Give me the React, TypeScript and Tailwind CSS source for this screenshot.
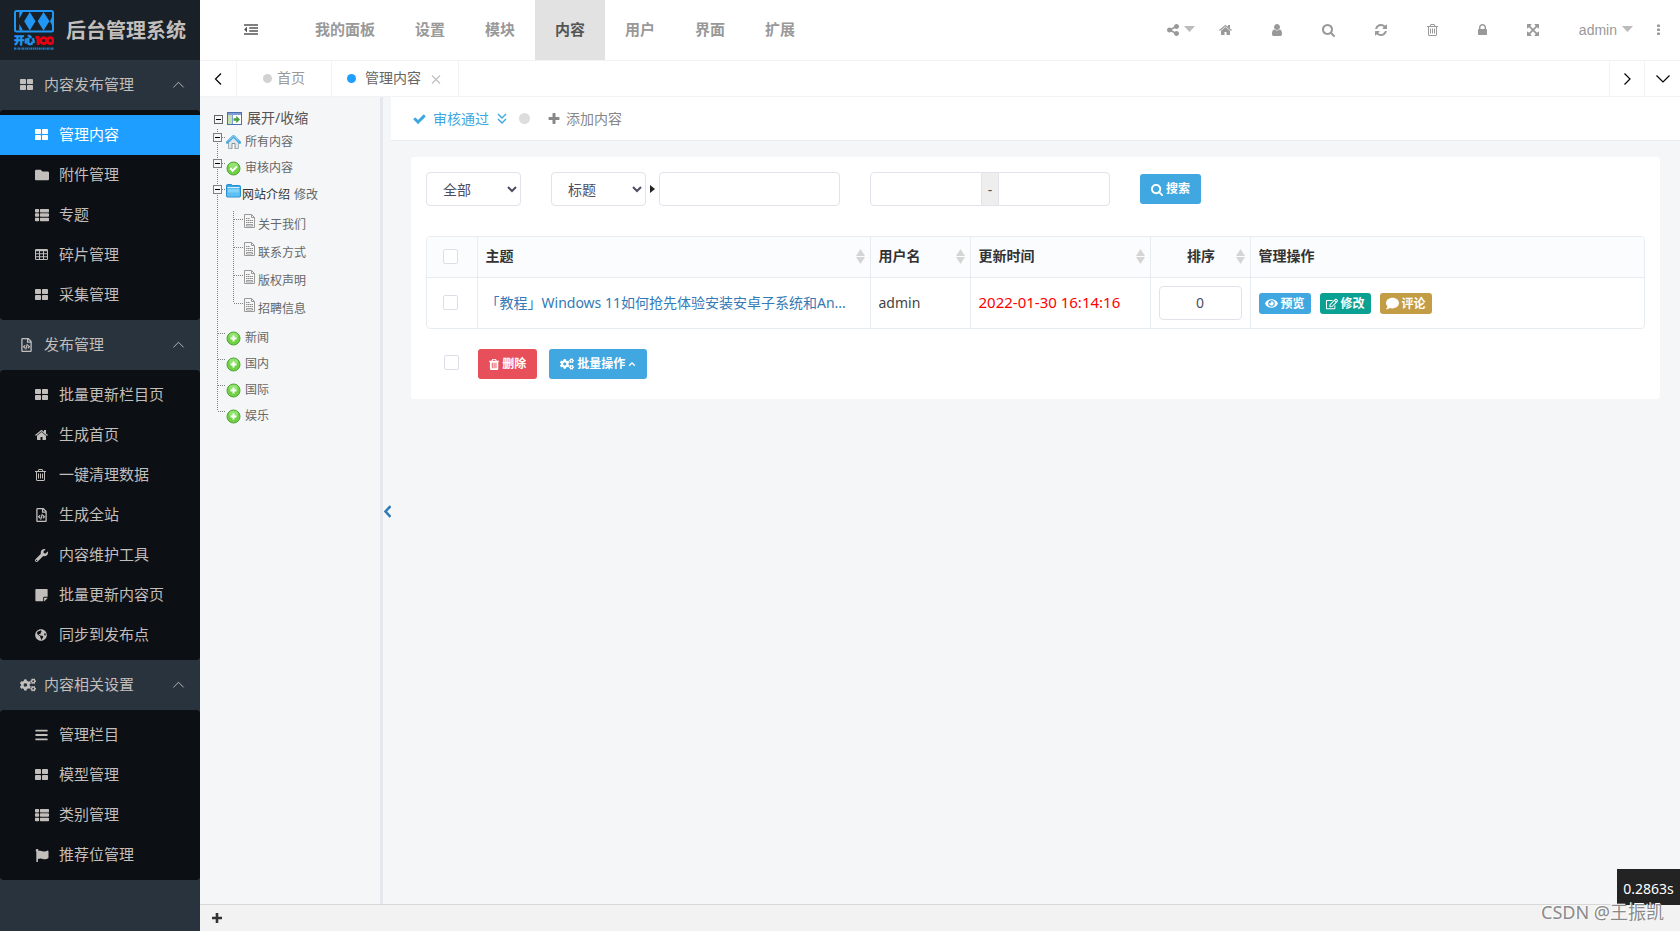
import type { ReactNode } from "react";
import {
  FaBars,
  FaCogs,
  FaComment,
  FaEye,
  FaFlag,
  FaFolder,
  FaGlobeAmericas,
  FaRegEdit,
  FaRegFileCode,
  FaStickyNote,
  FaThList,
  FaWrench,
} from "react-icons/fa";

const UI = "font-['Noto_Sans','Noto_Sans_CJK_SC',sans-serif]";
const HELV = "font-['Liberation_Sans','Noto_Sans_CJK_SC',sans-serif]";

/* ---------- glyph icons on a 1792 unit grid, 14px tall ---------- */

const glyphs = {
  thLarge: {
    w: 13,
    d: "M832 1024v384q0 52-38 90t-90 38h-512q-52 0-90-38t-38-90v-384q0-52 38-90t90-38h512q52 0 90 38t38 90zm0-768v384q0 52-38 90t-90 38h-512q-52 0-90-38t-38-90v-384q0-52 38-90t90-38h512q52 0 90 38t38 90zm896 768v384q0 52-38 90t-90 38h-512q-52 0-90-38t-38-90v-384q0-52 38-90t90-38h512q52 0 90 38t38 90zm0-768v384q0 52-38 90t-90 38h-512q-52 0-90-38t-38-90v-384q0-52 38-90t90-38h512q52 0 90 38t38 90z",
  },
  home: {
    w: 13,
    d: "M1472 992v480q0 26-19 45t-45 19h-384v-384h-256v384h-384q-26 0-45-19t-19-45v-480q0-1 .5-3t.5-3l575-474 575 474q1 2 1 6zm223-69l-62 74q-8 9-21 11h-3q-13 0-21-7l-692-577-692 577q-12 8-24 7-13-2-21-11l-62-74q-8-10-7-23.5t11-21.5l719-599q32-26 76-26t76 26l244 204v-195q0-14 9-23t23-9h192q14 0 23 9t9 23v408l219 182q10 8 11 21.5t-7 23.5z",
  },
  user: {
    w: 10,
    d: "M1536 1399q0 109-62.5 187t-150.5 78h-854q-88 0-150.5-78t-62.5-187q0-85 8.5-160.5t31.5-152 58.5-131 94-89 134.5-34.5q131 128 313 128t313-128q76 0 134.5 34.5t94 89 58.5 131 31.5 152 8.5 160.5zm-256-887q0 159-112.5 271.5t-271.5 112.5-271.5-112.5-112.5-271.5 112.5-271.5 271.5-112.5 271.5 112.5 112.5 271.5z",
  },
  search: {
    w: 13,
    d: "M1216 832q0-185-131.5-316.5t-316.5-131.5-316.5 131.5-131.5 316.5 131.5 316.5 316.5 131.5 316.5-131.5 131.5-316.5zm512 832q0 52-38 90t-90 38q-54 0-90-38l-343-342q-179 124-399 124-143 0-273.5-55.5t-225-150-150-225-55.5-273.5 55.5-273.5 150-225 225-150 273.5-55.5 273.5 55.5 225 150 150 225 55.5 273.5q0 220-124 399l343 343q37 37 37 90z",
  },
  refresh: {
    w: 12,
    d: "M1639 1056q0 5-1 7-64 268-268 434.5t-478 166.5q-146 0-282.5-55t-243.5-157l-129 129q-19 19-45 19t-45-19-19-45v-448q0-26 19-45t45-19h448q26 0 45 19t19 45-19 45l-137 137q71 66 161 102t187 36q134 0 250-65t186-179q11-17 53-117 8-23 30-23h192q13 0 22.5 9.5t9.5 22.5zm25-800v448q0 26-19 45t-45 19h-448q-26 0-45-19t-19-45 19-45l138-138q-148-137-349-137-134 0-250 65t-186 179q-11 17-53 117-8 23-30 23h-199q-13 0-22.5-9.5t-9.5-22.5v-7q65-268 270-434.5t480-166.5q146 0 284 55.5t245 156.5l130-129q19-19 45-19t45 19 19 45z",
  },
  trash: {
    w: 11,
    d: "M704 736v576q0 14-9 23t-23 9h-64q-14 0-23-9t-9-23v-576q0-14 9-23t23-9h64q14 0 23 9t9 23zm256 0v576q0 14-9 23t-23 9h-64q-14 0-23-9t-9-23v-576q0-14 9-23t23-9h64q14 0 23 9t9 23zm256 0v576q0 14-9 23t-23 9h-64q-14 0-23-9t-9-23v-576q0-14 9-23t23-9h64q14 0 23 9t9 23zm128 724v-948h-896v948q0 22 7 40.5t14.5 27 10.5 8.5h832q3 0 10.5-8.5t14.5-27 7-40.5zm-672-1076h448l-48-117q-7-9-17-11h-317q-10 2-17 11zm928 32v64q0 14-9 23t-23 9h-96v948q0 83-47 143.5t-113 60.5h-832q-66 0-113-58.5t-47-141.5v-952h-96q-14 0-23-9t-9-23v-64q0-14 9-23t23-9h309l70-167q15-37 54-63t79-26h320q40 0 79 26t54 63l70 167h309q14 0 23 9t9 23z",
  },
  trashSolid: {
    w: 11,
    d: "M704 1376v-704q0-14-9-23t-23-9h-64q-14 0-23 9t-9 23v704q0 14 9 23t23 9h64q14 0 23-9t9-23zm256 0v-704q0-14-9-23t-23-9h-64q-14 0-23 9t-9 23v704q0 14 9 23t23 9h64q14 0 23-9t9-23zm256 0v-704q0-14-9-23t-23-9h-64q-14 0-23 9t-9 23v704q0 14 9 23t23 9h64q14 0 23-9t9-23zm-544-992h448l-48-117q-7-9-17-11h-317q-10 2-17 11zm928 32v64q0 14-9 23t-23 9h-96v948q0 83-47 143.5t-113 60.5h-832q-66 0-113-58.5t-47-141.5v-952h-96q-14 0-23-9t-9-23v-64q0-14 9-23t23-9h309l70-167q15-37 54-63t79-26h320q40 0 79 26t54 63l70 167h309q14 0 23 9t9 23z",
  },
  lock: {
    w: 9,
    d: "M640 768h512v-192q0-106-75-181t-181-75-181 75-75 181v192zm832 96v576q0 40-28 68t-68 28h-960q-40 0-68-28t-28-68v-576q0-40 28-68t68-28h32v-192q0-184 132-316t316-132 316 132 132 316v192h32q40 0 68 28t28 68z",
  },
  expand: {
    w: 12,
    d: "M1411 541l-355 355 355 355 144-144q29-31 70-14 39 17 39 59v448q0 26-19 45t-45 19h-448q-42 0-59-40-17-39 14-69l144-144-355-355-355 355 144 144q31 30 14 69-17 40-59 40h-448q-26 0-45-19t-19-45v-448q0-42 40-59 39-17 69 14l144 144 355-355-355-355-144 144q-19 19-45 19-12 0-24-5-40-17-40-59v-448q0-26 19-45t45-19h448q42 0 59 40 17 39-14 69l-144 144 355 355 355-355-144-144q-31-30-14-69 17-40 59-40h448q26 0 45 19t19 45v448q0 42-39 59-13 5-25 5-26 0-45-19z",
  },
  share: {
    w: 12,
    d: "M1344 1024q133 0 226.5 93.5t93.5 226.5-93.5 226.5-226.5 93.5-226.5-93.5-93.5-226.5q0-12 2-34l-360-180q-92 86-218 86-133 0-226.5-93.5t-93.5-226.5 93.5-226.5 226.5-93.5q126 0 218 86l360-180q-2-22-2-34 0-133 93.5-226.5t226.5-93.5 226.5 93.5 93.5 226.5-93.5 226.5-226.5 93.5q-126 0-218-86l-360 180q2 22 2 34t-2 34l360 180q92-86 218-86z",
  },
  check: {
    w: 13,
    d: "M1671 566q0 40-28 68l-724 724-136 136q-28 28-68 28t-68-28l-136-136-362-362q-28-28-28-68t28-68l136-136q28-28 68-28t68 28l294 295 656-657q28-28 68-28t68 28l136 136q28 28 28 68z",
  },
  plus: {
    w: 12,
    d: "M1600 736v192q0 40-28 68t-68 28h-416v416q0 40-28 68t-68 28h-192q-40 0-68-28t-28-68v-416h-416q-40 0-68-28t-28-68v-192q0-40 28-68t68-28h416v-416q0-40 28-68t68-28h192q40 0 68 28t28 68v416h416q40 0 68 28t28 68z",
  },
  outdent: {
    w: 14,
    d: "M384 544v576q0 13-9.5 22.5t-22.5 9.5q-14 0-23-9l-288-288q-9-9-9-23t9-23l288-288q9-9 23-9 13 0 22.5 9.5t9.5 22.5zM32 160h1728q32 0 32 32v128q0 32-32 32h-1728q-32 0-32-32v-128q0-32 32-32zM704 544h1056q32 0 32 32v128q0 32-32 32h-1056q-32 0-32-32v-128q0-32 32-32zM704 928h1056q32 0 32 32v128q0 32-32 32h-1056q-32 0-32-32v-128q0-32 32-32zM32 1312h1728q32 0 32 32v128q0 32-32 32h-1728q-32 0-32-32v-128q0-32 32-32z",
  },
  ellipsis: {
    w: 3,
    d: "M800 192h192q96 0 96 96v128q0 96-96 96h-192q-96 0-96-96v-128q0-96 96-96zM800 704h192q96 0 96 96v128q0 96-96 96h-192q-96 0-96-96v-128q0-96 96-96zM800 1216h192q96 0 96 96v128q0 96-96 96h-192q-96 0-96-96v-128q0-96 96-96z",
  },
  table: {
    w: 13,
    d: "M224 128h1344q160 0 160 160v1088q0 160-160 160h-1344q-160 0-160-160v-1088q0-160 160-160zM192 416v256h384v-256zM704 416v256h384v-256zM1216 416v256h384v-256zM192 800v256h384v-256zM704 800v256h384v-256zM1216 800v256h384v-256zM192 1168v240h384v-240zM704 1168v240h384v-240zM1216 1168v240h384v-240z",
  },
};

function Glyph({ name, className = "h-[14px]" }: { name: keyof typeof glyphs; className?: string }) {
  const g = glyphs[name];
  return (
    <svg
      className={`${className} w-auto shrink-0`}
      viewBox={`${896 - g.w * 64} 0 ${g.w * 128} 1792`}
      fill="currentColor"
      fillRule="evenodd"
      aria-hidden="true"
    >
      <path d={g.d} />
    </svg>
  );
}

function Chevron({ d, className, width = 1.3 }: { d: string; className: string; width?: number }) {
  return (
    <svg className={className} viewBox="0 0 14 14" fill="none" stroke="currentColor" strokeWidth={width} aria-hidden="true">
      <path d={d} />
    </svg>
  );
}

/* ---------- sidebar ---------- */

function Logo() {
  return (
    <svg className="h-10 w-10 shrink-0" viewBox="0 0 40 40" aria-hidden="true">
      <rect width="40" height="22.500" rx="2.500" fill="#2196f3" />
      <path d="M2 2h36v18.500H2z" fill="#192027" />
      <g fill="#2196f3">
        <path d="M15.800 2L21.500 11.200 15.800 20.500 10.200 11.200z" />
        <path d="M29.500 2L35.500 11.200 29.500 20.500 23.700 11.200z" />
        <path d="M5.300 2H9L5.300 8.500zM5.300 20.500H9L5.300 14z" />
        <path d="M38.500 6v10.500L36 11.200z" />
      </g>
      <text x="0" y="34.300" fontSize="10.500" fontWeight="900" fill="#2196f3" fontFamily="Noto Sans CJK SC" stroke="#2196f3" strokeWidth=".5">
        开心
      </text>
      <g fill="none" stroke="#e60012" strokeWidth="2.800">
        <path d="M21.500 27.300h2.600V35" />
        <circle cx="29.700" cy="30.600" r="3" />
        <circle cx="36.300" cy="30.600" r="3" />
      </g>
      <path d="M0 38.600h40" stroke="#2196f3" strokeWidth="2.300" strokeDasharray="2 .6 1 .5" opacity=".75" />
    </svg>
  );
}

type Item = { icon: ReactNode; label: string; active?: boolean };

const groups: { icon: ReactNode; label: string; items: Item[] }[] = [
  {
    icon: <Glyph name="thLarge" />,
    label: "内容发布管理",
    items: [
      { icon: <Glyph name="thLarge" />, label: "管理内容", active: true },
      { icon: <FaFolder className="h-[14px] w-[14px]" />, label: "附件管理" },
      { icon: <FaThList className="h-[14px] w-[14px]" />, label: "专题" },
      { icon: <Glyph name="table" />, label: "碎片管理" },
      { icon: <Glyph name="thLarge" />, label: "采集管理" },
    ],
  },
  {
    icon: <FaRegFileCode className="h-[14px] w-[13px]" />,
    label: "发布管理",
    items: [
      { icon: <Glyph name="thLarge" />, label: "批量更新栏目页" },
      { icon: <Glyph name="home" />, label: "生成首页" },
      { icon: <Glyph name="trash" />, label: "一键清理数据" },
      { icon: <FaRegFileCode className="h-[14px] w-[13px]" />, label: "生成全站" },
      { icon: <FaWrench className="h-[13px] w-[13px]" />, label: "内容维护工具" },
      { icon: <FaStickyNote className="h-[14px] w-[13px]" />, label: "批量更新内容页" },
      { icon: <FaGlobeAmericas className="h-3 w-3" />, label: "同步到发布点" },
    ],
  },
  {
    icon: <FaCogs className="h-4 w-4" />,
    label: "内容相关设置",
    items: [
      { icon: <FaBars className="h-[14px] w-[13px]" />, label: "管理栏目" },
      { icon: <Glyph name="thLarge" />, label: "模型管理" },
      { icon: <FaThList className="h-[14px] w-[14px]" />, label: "类别管理" },
      { icon: <FaFlag className="h-[13px] w-[14px]" />, label: "推荐位管理" },
    ],
  },
];

function Sidebar() {
  return (
    <aside className="w-[200px] shrink-0 bg-[#28333e] text-[15px] text-[#c2bebc]">
      <div className="flex h-[60px] items-center gap-3 bg-[#192027] pr-3 pl-[14px]">
        <Logo />
        <h1 className="pt-[2px] text-xl font-bold whitespace-nowrap">后台管理系统</h1>
      </div>
      <nav>
        {groups.map((g) => (
          <section key={g.label}>
            <button type="button" className="flex h-[50px] w-full items-center pr-[15px] pl-5 text-left">
              <span className="flex w-6 items-center">{g.icon}</span>
              <span className="flex-1 pb-[2px]">{g.label}</span>
              <Chevron d="M1.500 9L7 3.500 12.500 9" className="h-[13px] w-[13px]" width={1} />
            </button>
            <ul className="rounded-sm bg-[#0c0f13] py-[5px]">
              {g.items.map((it) => (
                <li key={it.label}>
                  <a
                    href="#"
                    className={`flex h-10 items-center pl-[35px] ${it.active ? "bg-[#1e9fff] text-white" : ""}`}
                  >
                    <span className="flex w-6 items-center">{it.icon}</span>
                    <span className="pb-[2px]">{it.label}</span>
                  </a>
                </li>
              ))}
            </ul>
          </section>
        ))}
      </nav>
    </aside>
  );
}

/* ---------- top bar and tabs ---------- */

function Caret() {
  return (
    <svg className="mb-[3px] h-[6px] w-[11px]" viewBox="0 0 11 6" fill="#bbb" aria-hidden="true">
      <path d="M0 0h11L5.500 6z" />
    </svg>
  );
}

const menus = ["我的面板", "设置", "模块", "内容", "用户", "界面", "扩展"];
const tools: { name: keyof typeof glyphs; label: string }[] = [
  { name: "home", label: "首页" },
  { name: "user", label: "用户" },
  { name: "search", label: "搜索" },
  { name: "refresh", label: "刷新" },
  { name: "trash", label: "清理" },
  { name: "lock", label: "锁定" },
  { name: "expand", label: "全屏" },
];

function TopBar() {
  return (
    <header className={`flex h-[61px] border-b border-[#f3f3f3] bg-white text-[#999] ${HELV}`}>
      <button type="button" aria-label="收起侧栏" className="mr-[17px] ml-[23px] flex w-[55px] items-center justify-center text-[#555]">
        <Glyph name="outdent" />
      </button>
      <nav className="flex text-[15px] font-bold">
        {menus.map((m) => (
          <a key={m} href="#" className={`flex items-center px-5 ${m === "内容" ? "bg-[#e2e2e2] text-[#555]" : ""}`}>
            {m}
          </a>
        ))}
      </nav>
      <div className="ml-auto flex items-center pr-5">
        <button type="button" aria-label="分享" className="flex items-center gap-[5px] pr-1">
          <Glyph name="share" />
          <Caret />
        </button>
        {tools.map((t) => (
          <button key={t.name} type="button" aria-label={t.label} className="px-5">
            <Glyph name={t.name} />
          </button>
        ))}
        <button type="button" className="ml-5 flex items-center gap-[5px] text-[14px]">
          admin
          <Caret />
        </button>
        <button type="button" aria-label="更多" className="ml-6">
          <Glyph name="ellipsis" />
        </button>
      </div>
    </header>
  );
}

function TabBar() {
  return (
    <div className="flex h-9 border-b border-[#f3f3f3] bg-white text-[14px]">
      <button type="button" aria-label="向左" className="flex w-[37px] items-center justify-center border-r border-[#f3f3f3] text-black">
        <Chevron d="M10 1.500L4.500 7l5.500 5.500" className="h-[14px] w-[14px]" width={1.2} />
      </button>
      <a href="#" className="flex w-[95px] items-center gap-[5px] border-r border-[#f3f3f3] pl-[26px] text-[#999]">
        <span className="h-[9px] w-[9px] rounded-full bg-[#d2d2d2]" />
        <span className="pb-[2px]">首页</span>
      </a>
      <div className="flex w-[127px] items-center border-r border-[#f3f3f3] pl-[15px] text-[#666]">
        <span className="mr-[9px] h-[9px] w-[9px] rounded-full bg-[#1e9fff]" />
        <a href="#" className="pb-[2px]">管理内容</a>
        <button type="button" aria-label="关闭" className="ml-2 text-[#c2c2c2]">
          <Chevron d="M3 3.500l8 8M11 3.500l-8 8" className="h-[14px] w-[14px]" />
        </button>
      </div>
      <button type="button" aria-label="向右" className="ml-auto flex w-[35px] items-center justify-center border-l border-[#f3f3f3] text-black">
        <Chevron d="M4.500 1.500L10 7l-5.500 5.500" className="h-[14px] w-[14px]" width={1.2} />
      </button>
      <button type="button" aria-label="标签菜单" className="flex w-9 items-center justify-center border-l border-[#f3f3f3] text-black">
        <Chevron d="M.5 3.500L7 10 13.500 3.500" className="h-[14px] w-[14px]" width={1.2} />
      </button>
    </div>
  );
}

/* ---------- category tree ---------- */

function Branch({ toggle, last }: { toggle?: boolean; last?: boolean }) {
  return (
    <svg className="h-[26px] w-[13px] shrink-0" viewBox="0 0 13 26" fill="none" aria-hidden="true">
      <path d={`M4.500 0V${last ? 8 : 26}`} stroke="#808080" strokeDasharray="1 1" />
      <path d="M5 8.500h8" stroke="#808080" strokeDasharray="1 1" />
      {toggle && (
        <>
          <rect x=".5" y="4.500" width="8" height="8" fill="#f4f6f8" stroke="#808080" />
          <path d="M2 8.500h5" stroke="#000" />
        </>
      )}
    </svg>
  );
}

function HouseIcon() {
  return (
    <svg className="h-4 w-[15px]" viewBox="0 0 15 16" aria-hidden="true">
      <path d="M2.500 7.500v7h10v-7L7.500 3z" fill="#dfe7ec" stroke="#8fa0ab" strokeWidth=".8" />
      <path d="M6 15V9.500h3V15" fill="#fff" stroke="#8b8f94" strokeWidth="1" />
      <path d="M1.200 8.500L7.500 2.300l6.300 6.200" fill="none" stroke="#4ba9e0" strokeWidth="2.600" strokeLinejoin="round" strokeLinecap="round" />
      <path d="M2.500 6.700L7.500 1.900l5 4.800" fill="none" stroke="#9bd6f5" strokeWidth="1" />
    </svg>
  );
}

function RoundIcon({ kind }: { kind: "check" | "plus" }) {
  return (
    <svg className="h-[15px] w-[15px]" viewBox="0 0 15 15" aria-hidden="true">
      <circle cx="7.500" cy="7.500" r="6.500" fill="#6fd143" stroke="#4fa436" />
      <ellipse cx="7.500" cy="4.800" rx="4.500" ry="3" fill="#a0e982" opacity=".7" />
      {kind === "check" ? (
        <path d="M4.200 7.300l2.400 2.500 4.200-4.200" fill="none" stroke="#fff" strokeWidth="2" />
      ) : (
        <path d="M7.500 4.500v6M4.500 7.500h6" stroke="#fff" strokeWidth="2" />
      )}
    </svg>
  );
}

function FolderIcon() {
  return (
    <svg className="h-[14px] w-[15px]" viewBox="0 0 15 14" aria-hidden="true">
      <path d="M.5 1.500Q.5.5 1.500.5h4l1 1h7q1 0 1 1V12q0 1-1 1h-12q-1 0-1-1z" fill="#35a5e8" stroke="#2b8fd0" />
      <path d="M1.500 4.500h12V12h-12z" fill="#7fd3fb" />
      <path d="M1.500 3.500h12" stroke="#d4f1ff" />
      <path d="M1.500 8.500h12V12.500h-12z" fill="#5dbff3" />
    </svg>
  );
}

function PageIcon() {
  return (
    <svg className="h-[15px] w-[13px]" viewBox="0 0 13 15" aria-hidden="true">
      <path d="M1.500.5h7l3 3v10h-10z" fill="#f7f7f7" stroke="#999" />
      <path d="M8.500.5v3h3" fill="none" stroke="#999" />
      <path d="M3 4.500h4M3 6.500h7M3 8.500h7" stroke="#888" strokeDasharray="1.500 .5" />
      <path d="M3.500 10.500h6v1.500h-6z" fill="#fff" stroke="#888" strokeWidth=".8" />
    </svg>
  );
}

function Tree() {
  return (
    <aside className="w-[183px] shrink-0 border-r-[3px] border-[#e5e7ed] pt-[11px] pl-[13px] text-[12px] text-[#666]">
      <button type="button" className="flex h-[21px] items-center pl-px text-[14px] text-[#555]">
        <svg className="mt-[2px] mr-1 h-[9px] w-[9px]" viewBox="0 0 9 9" aria-hidden="true">
          <rect x=".5" y=".5" width="8" height="8" fill="#f4f6f8" stroke="#666" />
          <path d="M2 4.500h5" stroke="#000" />
        </svg>
        <svg className="mr-[5px] h-[13px] w-[15px]" viewBox="0 0 15 13" aria-hidden="true">
          <rect x=".5" y=".5" width="14" height="12" fill="#fff" stroke="#4d6fae" />
          <path d="M1 1h13v2H1z" fill="#7d9fd6" />
          <path d="M1 3h4.500v9H1z" fill="#c5dfb0" />
          <path d="M5.500 3v9" stroke="#7d9fd6" />
          <path d="M6.500 6.200h2.800V3.800L13 7.500 9.300 11.200V8.800H6.500z" fill="#4a9e3f" />
        </svg>
        <span className="pb-[2px]">展开/收缩</span>
      </button>
      <ul>
        <li className="flex h-[26px]">
          <Branch toggle />
          <a href="#" className="flex items-center gap-1 self-center">
            <HouseIcon />
            所有内容
          </a>
        </li>
        <li className="flex h-[26px]">
          <Branch toggle />
          <a href="#" className="flex items-center gap-1 self-center">
            <RoundIcon kind="check" />
            审核内容
          </a>
        </li>
        <li className="flex">
          <div className="flex w-[13px] flex-col">
            <Branch toggle />
            <svg className="h-[118px] w-[13px]" aria-hidden="true">
              <path d="M4.500 0V118" stroke="#808080" strokeDasharray="1 1" />
            </svg>
          </div>
          <div>
            <div className="flex h-[26px] items-center">
              <span className="mr-px mb-[7px]">
                <FolderIcon />
              </span>
              <a href="#" className="pt-[2px] text-[#333]">网站介绍</a>
              <a href="#" className="ml-1 pt-[2px]">修改</a>
            </div>
            <ul className="pt-1 pb-[2px] pl-[7px]">
              {["关于我们", "联系方式", "版权声明", "招聘信息"].map((t, i) => (
                <li key={t} className="flex h-7">
                  <svg className="h-7 w-[10px]" viewBox="0 0 10 28" fill="none" aria-hidden="true">
                    <path d={`M.5 0V${i === 3 ? 8 : 28}M1 8.500h9`} stroke="#808080" strokeDasharray="1 1" />
                  </svg>
                  <a href="#" className="flex items-start">
                    <span className="mt-[3px] mr-[2px]">
                      <PageIcon />
                    </span>
                    <span className="mt-[5px] leading-[18px]">{t}</span>
                  </a>
                </li>
              ))}
            </ul>
          </div>
        </li>
        {["新闻", "国内", "国际", "娱乐"].map((t, i) => (
          <li key={t} className="flex h-[26px]">
            <Branch last={i === 3} />
            <a href="#" className="flex items-center gap-1 self-center">
              <RoundIcon kind="plus" />
              {t}
            </a>
          </li>
        ))}
      </ul>
    </aside>
  );
}

/* ---------- content ---------- */

const field = "h-[34px] rounded border border-[#e2e2ec] bg-white text-[14px] text-[#4d4d63]";

function Check({ label }: { label: string }) {
  return <input type="checkbox" aria-label={label} className="block h-[15px] w-[15px] appearance-none rounded-[2px] border border-[#dedee9] bg-white" />;
}

function Sorter() {
  return (
    <svg className="h-[15px] w-[9px]" viewBox="0 0 9 15" fill="#d5d5d5" aria-hidden="true">
      <path d="M0 7L4.500 0 9 7zM0 8h9l-4.500 7z" />
    </svg>
  );
}

function Th({ label, sort = true, center }: { label: string; sort?: boolean; center?: boolean }) {
  return (
    <th className="border-l border-[#e7ecf1] pr-[5px] pl-2 text-left font-bold">
      <span className="flex items-center">
        <span className={`flex-1 pb-[2px] ${center ? "pl-2 text-center" : ""}`}>{label}</span>
        {sort && <Sorter />}
      </span>
    </th>
  );
}

function Content() {
  const tag = "flex h-[21px] items-center gap-[3px] rounded-[3px] px-[6px] text-[12px] font-bold text-white";
  const btn = "flex h-[30px] items-center rounded-[3px] text-[12px] font-bold text-white";
  return (
    <main className="min-w-0 flex-1">
      <div className="flex h-11 items-center border-b border-[#e7ecf1] bg-white pl-[22px] text-[14px] text-[#888]">
        <a href="#" className="flex items-center text-[#3ea7e0]">
          <Glyph name="check" className="mr-[7px] h-[14px]" />
          审核通过
          <Chevron d="M3 2l4 4 4-4M3 7l4 4 4-4" className="ml-[6px] h-[14px] w-[14px]" width={1.4} />
        </a>
        <span className="mr-[18px] ml-[10px] h-[11px] w-[11px] rounded-full bg-[#ddd]" />
        <a href="#" className="flex items-center gap-[6px]">
          <Glyph name="plus" />
          添加内容
        </a>
      </div>

      <div className="mx-5 mt-4 rounded-[3px] bg-white px-[15px] pt-[15px] pb-5">
        <form className="flex items-center">
          <select aria-label="状态" className={`${field} w-[95px] px-3`}>
            <option>全部</option>
          </select>
          <select aria-label="字段" className={`${field} ml-[30px] w-[95px] px-3`}>
            <option>标题</option>
          </select>
          <svg className="mx-1 h-2 w-[5px]" viewBox="0 0 5 8" fill="#222" aria-hidden="true">
            <path d="M0 0l5 4-5 4z" />
          </svg>
          <input aria-label="关键词" className={`${field} w-[181px] px-3`} />
          <div className="ml-[30px] flex w-60">
            <input aria-label="开始日期" className={`${field} min-w-0 flex-1 rounded-r-none px-3`} />
            <span className="flex w-4 items-center justify-center border-y border-[#e2e2ec] bg-[#eee] text-[14px] text-[#555]">-</span>
            <input aria-label="结束日期" className={`${field} min-w-0 flex-1 rounded-l-none px-3`} />
          </div>
          <button type="button" className={`${btn} ml-[30px] gap-[3px] bg-[#40a7e1] px-[11px]`}>
            <Glyph name="search" className="h-[13px]" />
            搜索
          </button>
        </form>

        <div className="mt-[30px] overflow-hidden rounded border border-[#e7ecf1]">
          <table className="w-full table-fixed text-[14px] text-[#444]">
            <colgroup>
              <col className="w-[50px]" />
              <col className="w-[393px]" />
              <col className="w-[100px]" />
              <col className="w-[180px]" />
              <col className="w-[100px]" />
              <col />
            </colgroup>
            <thead>
              <tr className="h-10 bg-[#fbfcfe] text-[#333]">
                <th className="pl-4">
                  <Check label="全选" />
                </th>
                <Th label="主题" />
                <Th label="用户名" />
                <Th label="更新时间" />
                <Th label="排序" center />
                <Th label="管理操作" sort={false} />
              </tr>
            </thead>
            <tbody>
              <tr className="h-[51px] border-t border-[#e7ecf1]">
                <td className="pl-4">
                  <Check label="选择该行" />
                </td>
                <td className="border-l border-[#e7ecf1] px-2">
                  <a href="#" className="block truncate text-[#337ab7]">
                    「教程」Windows 11如何抢先体验安装安卓子系统和An...
                  </a>
                </td>
                <td className="border-l border-[#e7ecf1] px-2">admin</td>
                <td className="border-l border-[#e7ecf1] px-2 pb-[2px] text-[15px] text-[#f00]">2022-01-30 16:14:16</td>
                <td className="border-l border-[#e7ecf1] px-2">
                  <input aria-label="排序" defaultValue="0" className={`${field} block w-full text-center`} />
                </td>
                <td className="border-l border-[#e7ecf1] px-2">
                  <div className="flex gap-[9px] pt-[2px]">
                    <a href="#" className={`${tag} bg-[#40a7e1]`}>
                      <FaEye className="h-[13px] w-[13px]" />
                      预览
                    </a>
                    <a href="#" className={`${tag} bg-[#0aa092]`}>
                      <FaRegEdit className="h-3 w-3" />
                      修改
                    </a>
                    <a href="#" className={`${tag} bg-[#c29d45]`}>
                      <FaComment className="h-[13px] w-[13px]" />
                      评论
                    </a>
                  </div>
                </td>
              </tr>
            </tbody>
          </table>
        </div>

        <div className="mt-5 flex items-center pl-[18px]">
          <div className="mr-[19px] -mt-1">
            <Check label="全选" />
          </div>
          <button type="button" className={`${btn} gap-[3px] bg-[#e7505a] px-[11px]`}>
            <Glyph name="trashSolid" className="h-[13px]" />
            删除
          </button>
          <button type="button" className={`${btn} ml-3 gap-[3px] bg-[#40a7e1] px-[11px]`}>
            <FaCogs className="h-[14px] w-[14px]" />
            批量操作
            <Chevron d="M2 10l5-5 5 5" className="h-2 w-2" width={2.4} />
          </button>
        </div>
      </div>
    </main>
  );
}

export default function App() {
  return (
    <div className={`flex min-h-screen ${UI}`}>
      <Sidebar />
      <div className="flex min-w-0 flex-1 flex-col bg-[#f4f6f8]">
        <TopBar />
        <TabBar />
        <div className="flex flex-1">
          <Tree />
          <button type="button" aria-label="收起栏目树" className="flex w-2 shrink-0 items-center justify-center pt-[22px] text-[#337ab7]">
            <svg className="h-[13px] w-[7px]" viewBox="0 0 7 13" fill="none" stroke="currentColor" strokeWidth="2.600" aria-hidden="true">
              <path d="M6.500 1L1.500 6.500l5 5.500" />
            </svg>
          </button>
          <Content />
        </div>
        <footer className="relative flex h-[27px] items-center border-t border-[#d8d8d8] bg-[#f2f2f2] pl-3">
          <button type="button" aria-label="添加">
            <svg className="h-[10px] w-[10px]" viewBox="0 0 10 10" stroke="#333" strokeWidth="2.600" aria-hidden="true">
              <path d="M5 0v10M0 5h10" />
            </svg>
          </button>
          <div className="absolute right-0 bottom-full flex h-9 w-[63px] items-center justify-center bg-[#232323] pt-[2px] text-[14px] text-white">
            0.2863s
          </div>
          <div className="absolute right-4 bottom-[7px] text-[18px] leading-6 whitespace-nowrap text-[#8a8a8a] [text-shadow:-1px_-1px_0_#fff] font-['Noto_Sans','Noto_Sans_CJK_SC',sans-serif]">
            CSDN @王振凯
          </div>
        </footer>
      </div>
    </div>
  );
}
